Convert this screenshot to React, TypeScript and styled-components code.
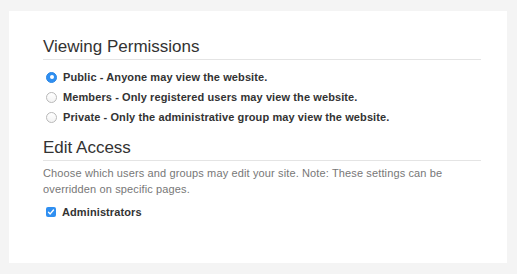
import React from "react";
import styled, { createGlobalStyle } from "styled-components";

const Global = createGlobalStyle`
  html, body { margin: 0; padding: 0; background: #f4f4f4; }
  body { font-family: "Liberation Sans", Arial, Helvetica, sans-serif; }
`;

const Card = styled.div`
  margin: 11px 10px 0 9px;
  height: 252px;
  box-sizing: border-box;
  background: #fff;
  padding: 26px 26px 0 34px;
`;

const Heading = styled.h2<{ $gap?: number }>`
  margin: ${(p) => p.$gap ?? 0}px 0 0;
  padding: 0 0 2px;
  font-size: 17px;
  line-height: 20px;
  font-weight: 400;
  color: #333;
  border-bottom: 1px solid #e4e4e4;
`;

const List = styled.div`
  display: flex;
  flex-direction: column;
  margin-top: 7px;
`;

const Row = styled.label`
  display: flex;
  align-items: center;
  height: 20px;
  font-size: 11px;
  font-weight: 700;
  letter-spacing: 0.1px;
  color: #333;
`;

const Radio = styled.span<{ $on?: boolean }>`
  box-sizing: border-box;
  width: 11px;
  height: 11px;
  border-radius: 50%;
  margin: 0 6px 0 3px;
  flex: none;
  position: relative;
  background: ${(p) => (p.$on ? "#2f8ff1" : "linear-gradient(#fff, #f3f3f3)")};
  border: 1px solid ${(p) => (p.$on ? "#2a86e6" : "#b9b9b9")};
  &::after {
    content: "";
    display: ${(p) => (p.$on ? "block" : "none")};
    position: absolute;
    left: 50%;
    top: 50%;
    width: 4px;
    height: 4px;
    margin: -2px 0 0 -2px;
    border-radius: 50%;
    background: #fff;
  }
`;

const Check = styled.span`
  box-sizing: border-box;
  width: 10px;
  height: 10px;
  border-radius: 2px;
  margin: 0 6px 0 3px;
  flex: none;
  background: #2f8ff1;
  display: flex;
  align-items: center;
  justify-content: center;
`;

const Desc = styled.p`
  margin: 4px 0 0;
  font-size: 11px;
  line-height: 16px;
  letter-spacing: 0.13px;
  color: #777;
`;

const Checks = styled.div`
  margin-top: 5px;
`;

export default function App() {
  return (
    <>
      <Global />
      <Card>
        <Heading>Viewing Permissions</Heading>
        <List>
          <Row>
            <Radio $on />
            Public - Anyone may view the website.
          </Row>
          <Row>
            <Radio />
            Members - Only registered users may view the website.
          </Row>
          <Row>
            <Radio />
            Private - Only the administrative group may view the website.
          </Row>
        </List>
        <Heading $gap={11}>Edit Access</Heading>
        <Desc>
          Choose which users and groups may edit your site. Note: These settings can be
          <br />
          overridden on specific pages.
        </Desc>
        <Checks>
          <Row>
            <Check>
              <svg width="8" height="8" viewBox="0 0 8 8">
                <path d="M1.5 4.2 L3.2 5.9 L6.5 2" fill="none" stroke="#fff" strokeWidth="1.4" strokeLinecap="round" strokeLinejoin="round" />
              </svg>
            </Check>
            Administrators
          </Row>
        </Checks>
      </Card>
    </>
  );
}
